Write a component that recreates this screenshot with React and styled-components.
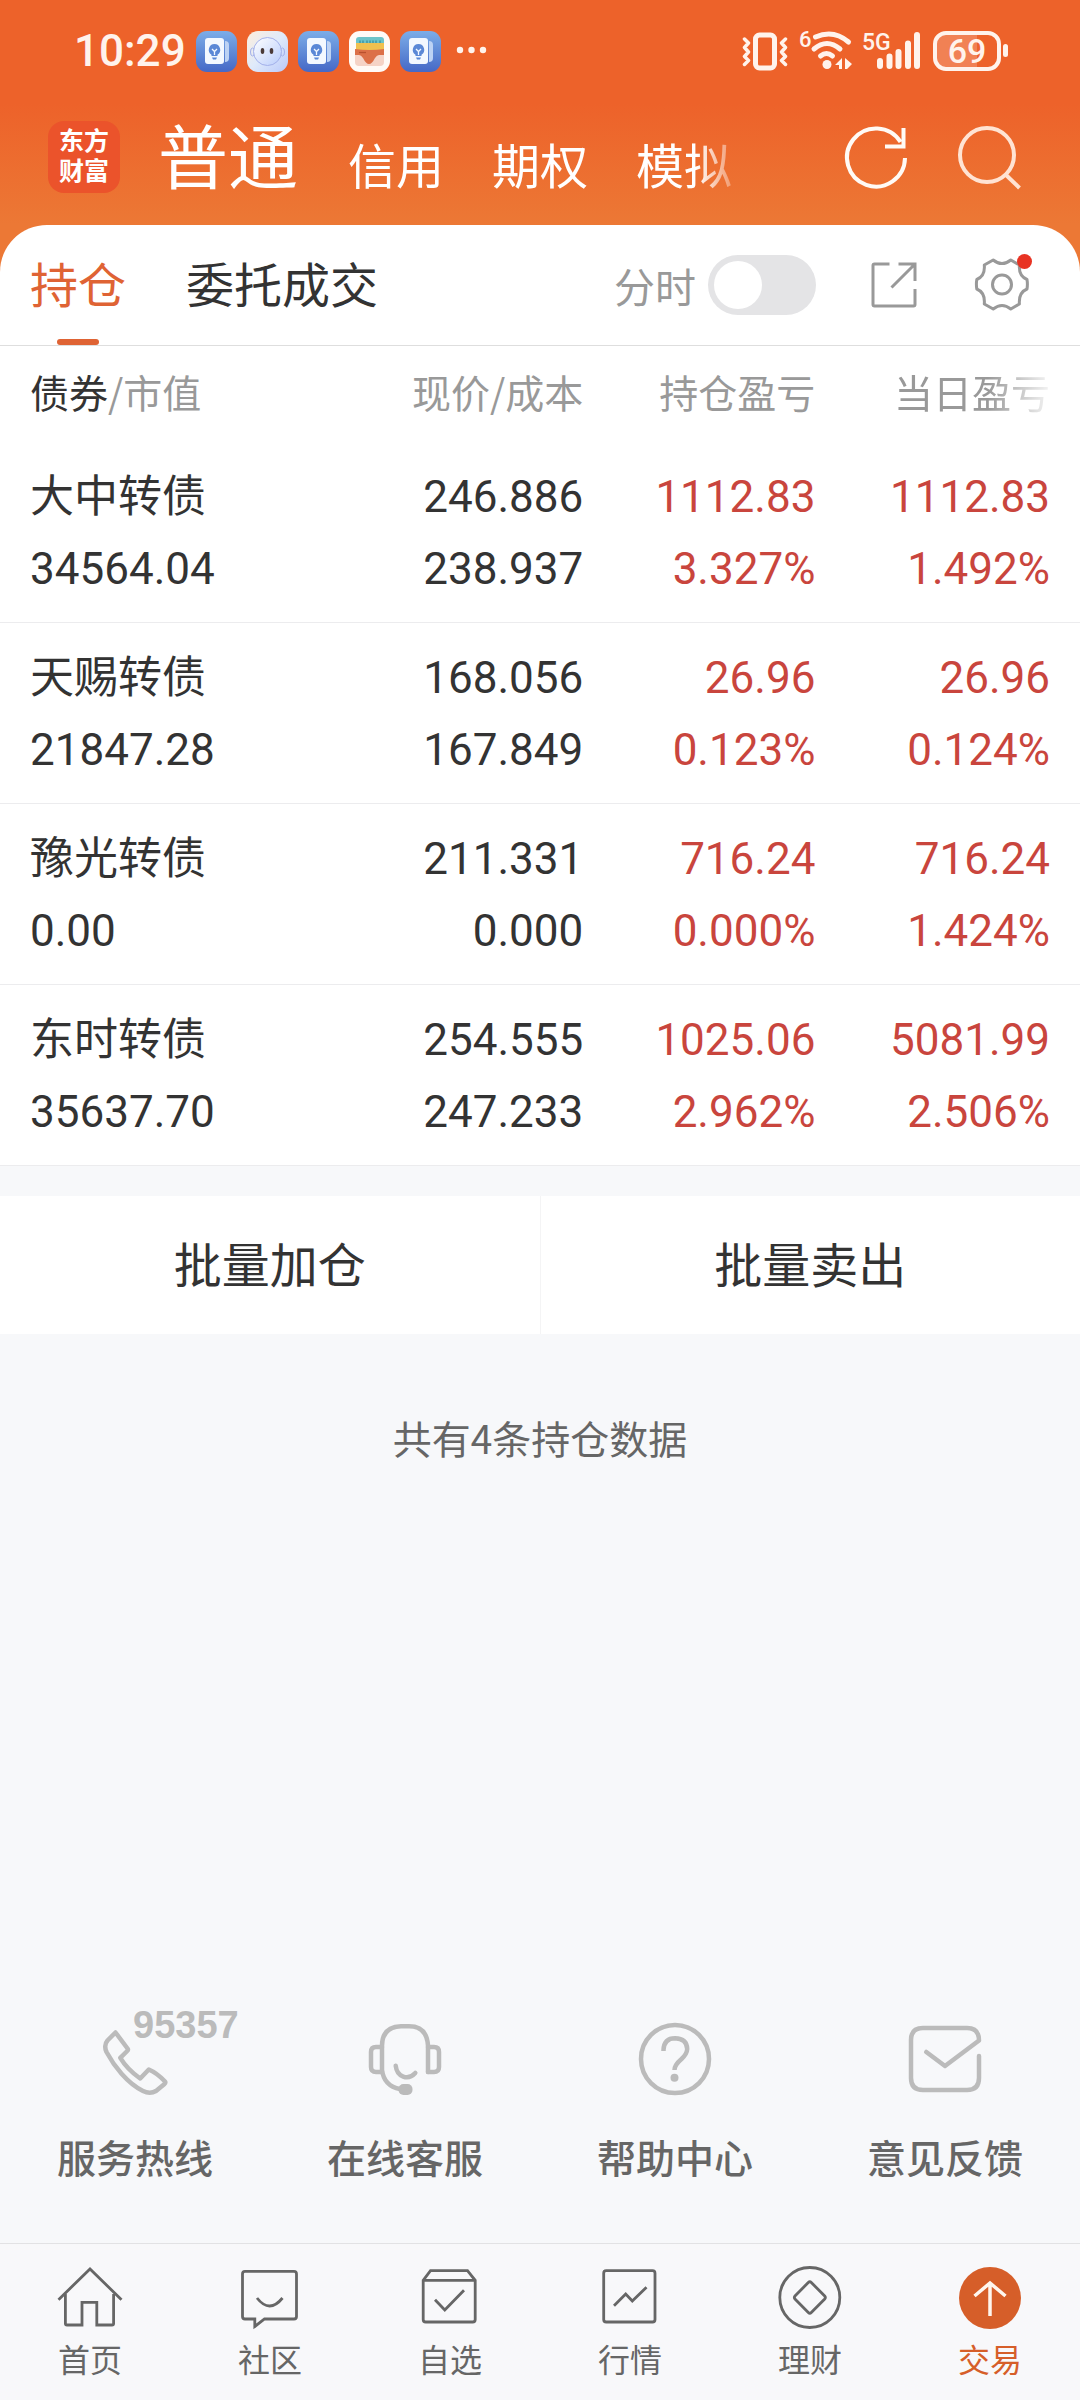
import React, { useState } from "react"
import styled, { createGlobalStyle } from "styled-components"

const GlobalStyle = createGlobalStyle`
* {
box-sizing: border-box;
}
body {
margin: 0;
background-color: #f7f8fa;
color: #333;
font-family: "Noto Sans CJK SC", sans-serif;
}
button, input {
font: inherit;
color: inherit;
margin: 0;
padding: 0;
border: none;
background: none;
}
a {
color: inherit;
text-decoration: none;
}
svg {
display: block;
flex: none;
overflow: visible;
}
`

const Page = styled.div`
min-height: 100vh;
display: flex;
flex-direction: column;
`

// top

const Top = styled.header`
background: linear-gradient(#ed622a 0, #ed622a 104px, #ec7835 224px);
padding-bottom: 60px;
`
const StatusBar = styled.div`
height: 102px;
padding: 0 71px 0 74px;
display: flex;
align-items: center;
justify-content: space-between;
color: #fff3ec;
font-family: Roboto, sans-serif;
font-weight: 500;
`
const StatusGroup = styled.div`
display: flex;
align-items: center;
gap: ${(p) => p.$gap}px;
`
const Time = styled.time`
font-size: 44px;
line-height: 48px;
`
const AppBar = styled.div`
height: 110px;
padding: 0 59px 0 48px;
display: flex;
align-items: center;
`
const Brand = styled.a`
width: 72px;
height: 72px;
margin-right: 36px;
border-radius: 16px;
background-color: #eb532b;
color: white;
display: grid;
place-content: center;
text-align: center;
font-family: Roboto, "Noto Sans CJK SC", sans-serif;
font-size: 25px;
font-weight: 700;
line-height: 30px;
`
const Accounts = styled.nav`
padding-top: 2px;
display: flex;
align-items: baseline;
gap: 48px;
mask-image: linear-gradient(90deg, #000 calc(100% - 36px), rgba(0, 0, 0, .3));
`
const Account = styled.button`
min-width: ${(p) => (p.$active ? 144 : 96)}px;
color: white;
font-size: ${(p) => (p.$active ? 70 : 48)}px;
line-height: 80px;
white-space: nowrap;
`
const AppActions = styled.div`
margin-left: auto;
display: flex;
gap: 51px;
`
const IconButton = styled.button`
display: block;
color: ${(p) => p.$color || "#999"};
`

// positions

const Panel = styled.main`
margin-top: -47px;
border-radius: 47px 47px 0 0;
background-color: white;
`
const TabBar = styled.div`
height: 121px;
padding: 0 51px 0 30px;
border-bottom: 1px solid #dedede;
display: flex;
align-items: center;
`
const Tab = styled.button`
margin-right: 60px;
display: flex;
flex-direction: column;
align-items: center;
font-size: 48px;
line-height: 114px;
color: ${(p) => (p.$active ? "#df6334" : "#333")};
&::after {
content: "";
width: 42px;
height: 6px;
border-radius: 3px;
background-color: ${(p) => (p.$active ? "#df6334" : "transparent")};
}
`
const Tools = styled.div`
margin-left: auto;
display: flex;
align-items: center;
gap: 58px;
`
const SwitchField = styled.label`
margin-right: -3px;
display: flex;
align-items: center;
gap: 12px;
color: #999;
font-size: 41px;
line-height: 60px;
`
const Switch = styled.input`
appearance: none;
width: 108px;
height: 60px;
padding: 6px;
border-radius: 30px;
background-color: #e4e4e6;
&::before {
content: "";
display: block;
width: 48px;
height: 48px;
border-radius: 50%;
background-color: white;
}
&:checked {
background-color: #df6334;
}
&:checked::before {
margin-left: auto;
}
`
const Table = styled.table`
width: 100%;
table-layout: fixed;
border-collapse: collapse;
`
const Th = styled.th`
width: ${(p) => p.$width};
padding: 20px 0 26px;
color: #999;
font-size: 39px;
font-weight: 400;
line-height: 50px;
text-align: right;
white-space: nowrap;
&:first-child {
padding-left: 30px;
text-align: left;
}
&:last-child {
padding-right: 30px;
}
`
const Strong = styled.span`
color: #333;
`
const Fade = styled.span`
mask-image: linear-gradient(90deg, #000 60%, rgba(0, 0, 0, .1));
`
const Row = styled.tr`
border-bottom: 1px solid #ececee;
`
const Td = styled.td`
padding: 19px 0 17px;
font-family: Roboto, "Noto Sans CJK SC", sans-serif;
font-size: 44px;
line-height: 72px;
text-align: right;
color: ${(p) => (p.$up ? "#c9453d" : "#333")};
&:first-child {
padding-left: 30px;
text-align: left;
}
&:last-child {
padding-right: 30px;
}
`
const Line = styled.div`
white-space: nowrap;
`
const Batch = styled.div`
margin-top: 30px;
display: flex;
background-color: white;
`
const BatchButton = styled.button`
flex: 1;
height: 138px;
padding-bottom: 6px;
font-size: 48px;
line-height: 60px;
& + & {
border-left: 1px solid #f4f4f5;
}
`
const Summary = styled.p`
margin: 79px 0;
text-align: center;
color: #666;
font-size: 39px;
line-height: 48px;
`

// bottom

const Services = styled.div`
margin-top: auto;
padding-bottom: 63px;
display: grid;
grid-template-columns: repeat(4, 1fr);
`
const Service = styled.a`
display: flex;
flex-direction: column;
align-items: center;
gap: 36px;
color: #666;
font-size: 39px;
font-weight: 500;
line-height: 48px;
svg {
color: #bbb;
}
`
const Hotline = styled.text`
font-family: "Liberation Sans", sans-serif;
font-size: 38px;
font-weight: 700;
fill: #bbb;
`
const TabNav = styled.nav`
padding: 22px 0;
border-top: 1px solid #e2e2e4;
background-color: #f8f8fa;
display: grid;
grid-template-columns: repeat(6, 1fr);
`
const NavLink = styled.a`
display: flex;
flex-direction: column;
align-items: center;
gap: 8px;
font-size: 32px;
line-height: 40px;
color: ${(p) => (p.$active ? "#d65e29" : "#666")};
`

const Icon = ({ w, h = w, stroke = 3, round, children }) => (
    <svg
        width={w}
        height={h}
        viewBox={`0 0 ${w} ${h}`}
        fill="none"
        stroke="currentColor"
        strokeWidth={stroke}
        strokeLinecap={round ? "round" : "butt"}
        strokeLinejoin={round ? "round" : "miter"}
        aria-hidden="true"
    >
        {children}
    </svg>
)

const BulbApp = () => (
    <Icon w={41}>
        <defs>
            <linearGradient id="bulbBg" x2="0" y2="1">
                <stop stopColor="#7cade8" />
                <stop offset="1" stopColor="#4568c6" />
            </linearGradient>
        </defs>
        <rect width="41" height="41" rx="11" fill="url(#bulbBg)" stroke="none" />
        <path d="M29 10q4 0 4 4v13q0 4-4 4z" fill="#bcd2f4" stroke="none" />
        <rect x="9" y="7" width="19" height="26" rx="3" fill="#f3f8ff" stroke="none" />
        <path d="M18.5 13a5.8 5.8 0 0 0-3 10.700V25h6v-1.300a5.8 5.8 0 0 0-3-10.700zM16 26.500h5l-1 2h-3z" fill="#5b88d6" stroke="none" />
        <path d="M16 18l2.500 2.500L21 18M18.500 20.500V24" stroke="#f3f8ff" strokeWidth="1.3" />
    </Icon>
)

const FaceApp = () => (
    <Icon w={41}>
        <defs>
            <linearGradient id="faceBg" x2="1" y2="1">
                <stop stopColor="#fdeedd" />
                <stop offset=".5" stopColor="#dfeafa" />
                <stop offset="1" stopColor="#b9c9fb" />
            </linearGradient>
            <linearGradient id="faceHead" x2="1" y2="1">
                <stop stopColor="#fff" />
                <stop offset="1" stopColor="#b9cdfb" />
            </linearGradient>
        </defs>
        <rect width="41" height="41" rx="11" fill="url(#faceBg)" stroke="none" />
        <ellipse cx="5.5" cy="21" rx="2" ry="4" stroke="#a3b0ea" strokeWidth="1" />
        <ellipse cx="35.5" cy="21" rx="2" ry="4" stroke="#a3b0ea" strokeWidth="1" />
        <circle cx="20.5" cy="20.5" r="14" fill="url(#faceHead)" stroke="#a3b0ea" strokeWidth="1" />
        <ellipse cx="15.5" cy="20" rx="1.8" ry="3" fill="#4a3a38" stroke="none" />
        <ellipse cx="24.5" cy="20" rx="1.8" ry="3" fill="#4a3a38" stroke="none" />
    </Icon>
)

const WalletApp = () => (
    <Icon w={41}>
        <rect width="41" height="41" rx="11" fill="#fffaf6" stroke="none" />
        <path d="M6 24h29v7q0 4-4 4H10q-4 0-4-4z" fill="#f5d3c6" stroke="none" />
        <path d="M7 13V9q0-3 3-3h22q3 0 3 3v4z" fill="#6cc3c8" stroke="none" />
        <path d="M11 9.5v3M14 9.5v3M18 9.5v3M21 9.5v3M24 9.5v3M27 9.5v3M31 9.5v3" stroke="#3d8f9b" strokeWidth="1.3" />
        <path d="M7 12h28v8H7z" fill="#f0c04e" stroke="none" />
        <path d="M6 18q15 2 29 0v6h-5q-2 0-4 3-3 6-6 6t-6-6q-2-3-4-3H6z" fill="#dc7048" stroke="none" />
        <path d="M10 21.5h7" stroke="#b9502e" strokeWidth="1.3" />
    </Icon>
)

const StatusIcons = () => (
    <StatusGroup $gap={12}>
        <Icon w={46} h={40} stroke={5} round>
            <rect x="13.5" y="4" width="19" height="33" rx="4" />
            <path d="M2.5 8l4 4-4 4.500 4 4.500-4 4.500 4 4-4 4M43.500 8l-4 4 4 4.500-4 4.500 4 4.500-4 4 4 4" strokeWidth="3.5" />
        </Icon>
        <Icon w={52} h={40} stroke={5} round>
            <text x="-1" y="16" fontSize="22" fill="currentColor" stroke="none">6</text>
            <path d="M15.5 6q18-8 33 5M14 18q13-11 26 0M20.500 25q6-5 12 0" />
            <circle cx="27" cy="33.5" r="4.5" fill="currentColor" stroke="none" />
            <path d="M42 27v11h-3v-4h-4zM45 27l7 6-5 5h-2z" fill="currentColor" stroke="none" />
        </Icon>
        <Icon w={57} h={40} stroke={6} round>
            <text x="-2" y="19" fontSize="23" fill="currentColor" stroke="none">5G</text>
            <path d="M16 30v5M25.500 25.500V35M34.500 21v14M44 12.500V35M53 4v31" />
        </Icon>
        <Icon w={76} h={40} stroke={4}>
            <path d="M12 2h32v36H12Q2 38 2 28V12Q2 2 12 2z" fill="currentColor" fillOpacity=".22" stroke="none" />
            <rect x="2" y="2" width="64" height="36" rx="11" />
            <path d="M72.5 15.500v8" strokeWidth="5" strokeLinecap="round" />
            <text x="34" y="32" fontSize="34" textAnchor="middle" fill="currentColor" stroke="none">69</text>
        </Icon>
    </StatusGroup>
)

const RefreshIcon = () => (
    <Icon w={62} stroke={4}>
        <path d="M60 32A29 29 0 1 1 55.500 16M58.500 2v18.500H40" />
    </Icon>
)

const SearchIcon = () => (
    <Icon w={63} stroke={4}>
        <circle cx="29" cy="29" r="27" />
        <path d="M47 48l14.500 14" />
    </Icon>
)

const ShareIcon = () => (
    <Icon w={46}>
        <path d="M18.5 2H3.500Q2 2 2 3.500v39Q2 44 3.500 44h39q1.500 0 1.500-1.500V27M27.500 2H44v17M20.500 25.500L43.500 2.500" />
    </Icon>
)

const GearIcon = () => (
    <Icon w={54} round>
        <path d="M18.200 2Q27 9 35.800 2L44.400 7Q43.500 18 52 21.500Q52.800 26.300 52 31Q43.500 34.500 44.400 46L35.800 51Q27 44 18.200 51L9.300 46Q10.300 34.500 1.800 31Q1 26.300 1.800 21.500Q10.300 18 9.300 7Z" />
        <circle cx="27" cy="26.5" r="9.5" />
        <circle cx="49.5" cy="3.5" r="7.5" fill="#e83323" stroke="none" />
    </Icon>
)

const services = [
    {
        label: "服务热线",
        art: (
            <>
                <path d="M17.500 10.500L29.500 26.500Q30.500 28 29.200 29L22.300 35.800Q29 47 42.200 56.500L50.800 47.500Q59 51 67 59.500Q67.800 60.700 66.500 62L58 69Q52 72.500 45 69C29 61 16 44 8.500 30Q5.500 23 9.500 18.500Z" />
                <Hotline x="35" y="16" stroke="none">95357</Hotline>
            </>
        ),
    },
    {
        label: "在线客服",
        art: (
            <>
                <path d="M60 50V24Q59 4.300 41 4.300H33Q14 5 14 24V48Q16 64 32 67" />
                <path d="M14 25H8Q3 25 3 30V45Q3 50 8 50H14M60 25H66Q71 25 71 30V45Q71 50 66 50H60M27.700 43.700C29 55 40 59 47.300 51" />
                <rect x="30.5" y="62" width="14" height="11" rx="5" fill="currentColor" stroke="none" />
            </>
        ),
    },
    {
        label: "帮助中心",
        art: (
            <>
                <circle cx="37" cy="37" r="34" />
                <path d="M25.500 29V28Q26 16.300 37 16.300Q49 16.800 49.200 27Q49 32 43.500 37Q36.500 43 36.500 48" strokeLinecap="butt" />
                <circle cx="36.5" cy="55.7" r="4" fill="currentColor" stroke="none" />
            </>
        ),
    },
    {
        label: "意见反馈",
        art: <path d="M71 34V56Q71 68 59 68H15Q3 68 3 56V18Q3 6 15 6H59Q71 6 71 18.500L37 44L18.300 30" />,
    },
]

const navItems = [
    {
        label: "首页",
        art: <path d="M.5 33.700L32 3L63.500 33.700M7.400 28V57.500Q7.400 59 9 59H24V36.300H38.800V59H54Q55.600 59 55.600 57.500V28" />,
    },
    {
        label: "社区",
        art: (
            <>
                <path d="M7 5.300H56Q58.500 5.300 58.500 8V50.500Q58.500 53 56 53H26.500L16.800 60.500V53H7Q4.500 53 4.500 50.500V8Q4.500 5.300 7 5.300Z" />
                <path d="M19 32Q31.500 48 44.500 32" />
            </>
        ),
    },
    {
        label: "自选",
        art: <path d="M5.200 14.300L12.500 4.700H49.500L57.200 14.300V53.500Q57.200 56 54.700 56H7.700Q5.200 56 5.200 53.500ZM5.200 14.300H57.200M17 33.700L26.800 44L46 24.300" />,
    },
    {
        label: "行情",
        art: (
            <>
                <rect x="5.7" y="4.7" width="51.3" height="51.3" rx="2.5" />
                <path d="M16 39.700L27.700 28L34.300 35L48.500 21.300" />
            </>
        ),
    },
    {
        label: "理财",
        art: (
            <>
                <circle cx="31.8" cy="31.5" r="30" />
                <path d="M30.300 16.500Q31.800 15 33.300 16.500L46.700 30Q48 31.500 46.700 33L33.300 46.500Q31.800 48 30.300 46.500L17 33Q15.700 31.500 17 30Z" />
            </>
        ),
    },
    {
        label: "交易",
        active: true,
        art: (
            <>
                <circle cx="32" cy="32" r="31" fill="currentColor" stroke="none" />
                <path d="M16.500 30L32 17L47.500 30M32 17V50" stroke="#fff6ee" strokeWidth="3.5" />
            </>
        ),
    },
]

const positions = [
    ["大中转债", "34564.04", "246.886", "238.937", "1112.83", "3.327%", "1112.83", "1.492%"],
    ["天赐转债", "21847.28", "168.056", "167.849", "26.96", "0.123%", "26.96", "0.124%"],
    ["豫光转债", "0.00", "211.331", "0.000", "716.24", "0.000%", "716.24", "1.424%"],
    ["东时转债", "35637.70", "254.555", "247.233", "1025.06", "2.962%", "5081.99", "2.506%"],
]

const Cell = ({ up, top, bottom }) => (
    <Td $up={up}>
        <Line>{top}</Line>
        <Line>{bottom}</Line>
    </Td>
)

const App = () => {
    const [minute, setMinute] = useState(false)

    return (
        <Page>
            <GlobalStyle />
            <Top>
                <StatusBar>
                    <StatusGroup $gap={10}>
                        <Time>10:29</Time>
                        <BulbApp />
                        <FaceApp />
                        <BulbApp />
                        <WalletApp />
                        <BulbApp />
                        <Icon w={48} h={8}>
                            <g fill="currentColor" stroke="none">
                                <circle cx="9" cy="3" r="3.2" />
                                <circle cx="20.5" cy="3" r="3.2" />
                                <circle cx="32" cy="3" r="3.2" />
                            </g>
                        </Icon>
                    </StatusGroup>
                    <StatusIcons />
                </StatusBar>
                <AppBar>
                    <Brand href="#">东方<br />财富</Brand>
                    <Accounts>
                        <Account $active>普通</Account>
                        <Account>信用</Account>
                        <Account>期权</Account>
                        <Account>模拟</Account>
                    </Accounts>
                    <AppActions>
                        <IconButton $color="#fffaf5" aria-label="刷新"><RefreshIcon /></IconButton>
                        <IconButton $color="#ffe3d3" aria-label="搜索"><SearchIcon /></IconButton>
                    </AppActions>
                </AppBar>
            </Top>
            <Panel>
                <TabBar>
                    <Tab $active>持仓</Tab>
                    <Tab>委托成交</Tab>
                    <Tools>
                        <SwitchField>
                            分时
                            <Switch type="checkbox" role="switch" checked={minute} onChange={(e) => setMinute(e.target.checked)} />
                        </SwitchField>
                        <IconButton aria-label="分享"><ShareIcon /></IconButton>
                        <IconButton aria-label="设置"><GearIcon /></IconButton>
                    </Tools>
                </TabBar>
                <Table>
                    <thead>
                        <tr>
                            <Th $width="30%"><Strong>债券</Strong>/市值</Th>
                            <Th $width="24%">现价/成本</Th>
                            <Th $width="21.5%">持仓盈亏</Th>
                            <Th $width="24.5%"><Fade>当日盈亏</Fade></Th>
                        </tr>
                    </thead>
                    <tbody>
                        {positions.map(([name, value, price, cost, gain, rate, dayGain, dayRate]) => (
                            <Row key={name}>
                                <Cell top={name} bottom={value} />
                                <Cell top={price} bottom={cost} />
                                <Cell up top={gain} bottom={rate} />
                                <Cell up top={dayGain} bottom={dayRate} />
                            </Row>
                        ))}
                    </tbody>
                </Table>
            </Panel>
            <Batch>
                <BatchButton>批量加仓</BatchButton>
                <BatchButton>批量卖出</BatchButton>
            </Batch>
            <Summary>共有4条持仓数据</Summary>
            <Services>
                {services.map(({ label, art }) => (
                    <Service href="#" key={label}>
                        <Icon w={74} stroke={4.5} round>{art}</Icon>
                        {label}
                    </Service>
                ))}
            </Services>
            <TabNav>
                {navItems.map(({ label, active, art }) => (
                    <NavLink href="#" key={label} $active={active}>
                        <Icon w={64} stroke={2.8}>{art}</Icon>
                        {label}
                    </NavLink>
                ))}
            </TabNav>
        </Page>
    )
}

export default App
